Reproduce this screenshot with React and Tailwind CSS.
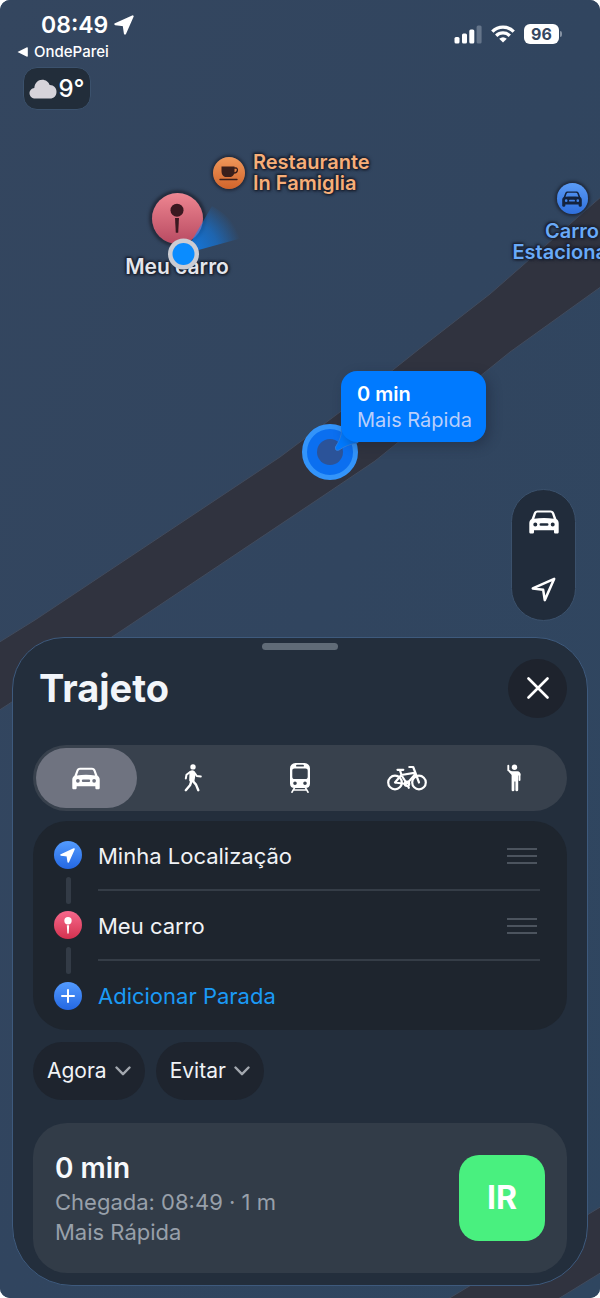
import React from "react";

function CarIcon({ className }) {
  return (
    <svg viewBox="0 0 30 24" className={className} fill="currentColor" aria-hidden="true">
      <path
        fillRule="evenodd"
        d="M8.6 0.6h12.8c2 0 3.2 0.9 3.9 2.7l2.1 5.8c1.500 1 2.300 2.400 2.300 4.300v8.500c0 1-0.600 1.700-1.600 1.700h-1.500c-1 0-1.600-0.700-1.600-1.700v-1.700H5v1.700c0 1-0.600 1.700-1.600 1.700H1.900c-1 0-1.600-0.700-1.600-1.700v-8.500c0-1.900 0.800-3.300 2.300-4.300l2.100-5.800C5.400 1.500 6.600 0.600 8.600 0.600zM9 2.600c-1 0-1.700 0.400-2.100 1.400L5.300 8.700c3-0.400 6.200-0.600 9.700-0.600s6.700 0.200 9.700 0.600l-1.600-4.700c-0.400-1-1.100-1.400-2.100-1.400zM6.300 12.500a2 2 0 1 0 0 4a2 2 0 1 0 0-4zM23.700 12.500a2 2 0 1 0 0 4a2 2 0 1 0 0-4zM11.800 13.200a1.300 1.300 0 0 0 0 2.600h6.400a1.300 1.300 0 0 0 0-2.600z"
      />
    </svg>
  );
}

function WalkIcon({ className }) {
  return (
    <svg viewBox="0 0 18 28" className={className} fill="none" stroke="currentColor" strokeLinecap="round" strokeLinejoin="round" aria-hidden="true">
      <circle cx="9" cy="2.900" r="2.700" fill="currentColor" stroke="none" />
      <path d="M6.400 7.800Q8.400 6.600 10 7.900L10.300 12.500L9.500 17L6.100 16.500z" fill="currentColor" strokeWidth="1.800" />
      <path d="M5.800 8.200L2.500 10.800L1.800 14.500" strokeWidth="2" />
      <path d="M10.500 8.700L12.800 12L16.800 12.500" strokeWidth="2" />
      <path d="M8.800 17L12 20.600L14.300 26.200" strokeWidth="2.400" />
      <path d="M7.300 17.500L6 21.300L1.800 26.200" strokeWidth="2.400" />
    </svg>
  );
}

function TrainIcon({ className }) {
  return (
    <svg viewBox="0 0 20 30" className={className} aria-hidden="true">
      <path
        fill="currentColor"
        fillRule="evenodd"
        d="M5.500 0h9C18 0.400 20 2.200 20 5.500v14.900c0 2.900-1.700 4.600-4.600 4.600H4.600C1.700 25 0 23.300 0 20.400V5.500C0 2.200 2 0.400 5.500 0zM7 1.700a0.900 0.900 0 0 0 0 1.900h6a0.900 0.900 0 0 0 0-1.900zM4.500 5.600C3.100 5.600 2.300 6.400 2.300 7.800v6.200c0 1.300 0.800 2.100 2.200 2.100h11c1.400 0 2.200-0.800 2.200-2.100V7.800c0-1.400-0.800-2.200-2.200-2.200zM5 18.400a1.800 1.800 0 1 0 0 3.600a1.800 1.800 0 1 0 0-3.600zM15 18.400a1.800 1.800 0 1 0 0 3.600a1.800 1.800 0 1 0 0-3.600z"
      />
      <path d="M4.300 25.200L2 29.200M15.700 25.200L18 29.200M4 27h12" stroke="currentColor" strokeWidth="1.700" strokeLinecap="round" fill="none" />
    </svg>
  );
}

function BikeIcon({ className }) {
  return (
    <svg viewBox="0 0 40 26" className={className} fill="none" stroke="currentColor" strokeWidth="2.200" strokeLinecap="round" strokeLinejoin="round" aria-hidden="true">
      <circle cx="8" cy="17.500" r="6.800" />
      <circle cx="32" cy="17.500" r="6.800" />
      <path d="M8 17.500L14.300 10L27.300 7.800M8 17.500L19 19M14.300 10L19.500 18M20.500 18L28 9.500M32 17.500L26.200 2H22.300M14.500 10L12.900 5M10.500 4.800H16.300" />
      <circle cx="20" cy="18.800" r="2.200" fill="none" />
      <path d="M20.800 20.800L21.800 22.800" />
    </svg>
  );
}

function HailIcon({ className }) {
  return (
    <svg viewBox="0 0 14 28" className={className} aria-hidden="true">
      <circle cx="7.500" cy="3.200" r="2.700" fill="currentColor" />
      <path d="M1.300 1.800V6.200L4.800 8.700M12.500 10V16" fill="none" stroke="currentColor" strokeWidth="1.900" strokeLinecap="round" strokeLinejoin="round" />
      <path d="M4 7.200H10.500Q13.400 7.500 13.400 10.500V11.500H11.200V26q0 1.300-1.400 1.300T8.400 26V17.600H7.400V26q0 1.300-1.400 1.300T4.600 26V11L2 8z" fill="currentColor" />
    </svg>
  );
}

function ArrowIcon({ className, outline }) {
  return (
    <svg viewBox="0 0 24 24" className={className} fill={outline ? "none" : "currentColor"} stroke="currentColor" strokeWidth={outline ? 2.4 : 2.6} strokeLinejoin="round" aria-hidden="true">
      <path d="M22.300 1.700L1.700 11L11.700 12.300L13.200 22.200z" />
    </svg>
  );
}

function PinGlyph({ className }) {
  return (
    <svg viewBox="0 0 14 30" className={className} fill="currentColor" aria-hidden="true">
      <circle cx="7" cy="6.700" r="6.500" />
      <path d="M5 14.500h4l-0.800 14.700h-2.400z" />
    </svg>
  );
}

function MapBackground() {
  return (
    <svg viewBox="0 0 600 1298" preserveAspectRatio="xMidYMid slice" className="absolute inset-0 h-full w-full" aria-hidden="true">
      <defs>
        <linearGradient id="ground" x1="0" y1="0" x2="1" y2="1">
          <stop offset="0" stopColor="#34465f" />
          <stop offset="0.500" stopColor="#31455f" />
          <stop offset="1" stopColor="#2f4660" />
        </linearGradient>
      </defs>
      <rect width="600" height="1298" fill="url(#ground)" />
      <path d="M-2 643L35 620L280 457L340 412L418 350L490 294L602 196V286L510 352L375 461L317 500L115 635L-2 711z" fill="#30333f" stroke="#414b5d" strokeWidth="1" />
      <path d="M448 1299L602 1206V1272L558 1299z" fill="#30333f" stroke="#414b5d" strokeWidth="1" />
    </svg>
  );
}

const glow = "[text-shadow:0_0_2px_#1c2230,0_0_3px_#1c2230,0_0_4px_#1c2230,1px_1px_2px_#1c2230,-1px_-1px_2px_#1c2230]";

function MapPins() {
  return (
    <div className="absolute inset-0 overflow-hidden">
      <div className="absolute left-[213px] top-[152px] flex items-center gap-2">
        <span className="flex size-8 items-center justify-center rounded-full bg-linear-to-b from-[#f0985a] to-[#d2642a] shadow-[0_0_3px_2px_#232c3d]">
          <svg viewBox="0 0 20 15" className="h-[15px] w-5 text-[#3a1f1b]" aria-hidden="true">
            <path d="M2.500 0.500h13v4.500c0 3.500-1.800 6-4.500 6H7c-2.700 0-4.500-2.500-4.500-6z" fill="currentColor" />
            <path d="M15 2h1.700c2.700 0 2.400 5-1.700 5" fill="none" stroke="currentColor" strokeWidth="1.300" />
            <path d="M1 13.500h17" stroke="currentColor" strokeWidth="1.400" strokeLinecap="round" />
          </svg>
        </span>
        <span className={"text-[20px] font-semibold leading-[21px] text-[#f7ae78] " + glow}>
          Restaurante
          <br />
          In Famiglia
        </span>
      </div>

      <div className="absolute left-[97px] top-[193px] flex w-40 flex-col items-center">
        <span className="flex size-[51px] items-center justify-center rounded-full bg-linear-to-b from-[#ee8691] to-[#b84a62] shadow-[0_0_3px_3px_#232c3d]">
          <PinGlyph className="h-[31px] w-[14px] text-[#3a1820]" />
        </span>
        <span className={"mt-[11px] whitespace-nowrap text-[21px] font-semibold leading-6 text-[#e4e6ec] " + glow}>Meu carro</span>
      </div>

      <svg viewBox="0 0 90 70" className="absolute left-[166px] top-[200px] h-[70px] w-[90px]" aria-hidden="true">
        <defs>
          <radialGradient id="beam" gradientUnits="userSpaceOnUse" cx="18" cy="54" r="58">
            <stop offset="0.200" stopColor="#0a84ff" stopOpacity="0.750" />
            <stop offset="0.600" stopColor="#0a84ff" stopOpacity="0.500" />
            <stop offset="1" stopColor="#0a84ff" stopOpacity="0" />
          </radialGradient>
        </defs>
        <path d="M18 54L46 6Q68 18 76 38z" fill="url(#beam)" />
        <circle cx="17.500" cy="54" r="15.500" fill="#cbccd3" />
        <circle cx="17.500" cy="54" r="11" fill="#0a8cff" />
      </svg>

      <div className="absolute left-[492px] top-[183px] flex w-40 flex-col items-center">
        <span className="flex size-[31px] items-center justify-center rounded-full bg-linear-to-b from-[#5b9bf5] to-[#2f6fdc] shadow-[0_0_3px_2px_#1f293b]">
          <CarIcon className="h-4 w-5 text-[#14233d]" />
        </span>
        <span className={"mt-[7px] text-center text-[20px] font-semibold leading-[21px] text-[#69aaf8] " + glow}>
          Carro
          <br />
          Estacionado
        </span>
      </div>

      <span className="absolute left-[302px] top-[424px] size-14 rounded-full border-5 border-[#3394fa] bg-[#0b6ff0] p-[10px]">
        <span className="block size-[26px] rounded-full bg-[#2b5399]" />
      </span>
      <svg viewBox="0 0 30 30" className="absolute left-[334px] top-[424px] size-[30px]" aria-hidden="true">
        <path d="M7.500 0V6C7.500 13 4.500 18 1.500 23Q1 27.500 5 26Q12 21 24 18.500z" fill="#007aff" stroke="#2f7fe0" strokeWidth="1" />
      </svg>
      <div className="absolute left-[341px] top-[371px] flex w-[145px] flex-col rounded-2xl bg-[#007aff] px-4 pb-[9px] pt-[10px] leading-[26px] shadow-[4px_4px_12px_rgba(20,30,50,0.35)]">
        <span className="text-[20px] font-semibold text-white">0 min</span>
        <span className="whitespace-nowrap text-[20px] text-[#b9cffb]">Mais Rápida</span>
      </div>
    </div>
  );
}

function StatusBar() {
  return (
    <header className="relative flex items-start justify-between pl-[17px] pr-[38px] pt-3 text-white">
      <div>
        <div className="flex items-center gap-[6px] pl-6">
          <span className="text-[23px] font-semibold leading-[26px]">08:49</span>
          <ArrowIcon className="size-5" />
        </div>
        <a href="#onde-parei" className="mt-1 flex items-center gap-[6px] text-[15px] font-medium leading-5">
          <svg viewBox="0 0 11 10" className="h-[10px] w-[11px]" fill="currentColor" aria-hidden="true">
            <path d="M0.500 5L10 0.300Q10.800 0.200 10.800 1V9Q10.800 9.800 10 9.700z" />
          </svg>
          OndeParei
        </a>
        <div className="ml-[6px] mt-[5px] flex h-[43px] w-[68px] items-center justify-center gap-px rounded-[14px] border border-[#3b516c] bg-[#222d3a]">
          <svg viewBox="0 0 28 20" className="h-5 w-7" fill="#d6d3da" aria-hidden="true">
            <path d="M6.500 19.500C3 19.500 0.500 17.200 0.500 14.200C0.500 11.300 2.700 9.200 5.300 8.900C5.700 4.200 9 0.800 13.200 0.800C16.800 0.800 19.500 3 20.600 6C24.600 5.800 27.500 8.800 27.500 12.700C27.500 16.700 24.800 19.500 21 19.500z" />
          </svg>
          <span className="text-[24px] font-medium leading-7">9°</span>
        </div>
      </div>
      <div className="flex items-center gap-[9px] pt-3">
        <svg viewBox="0 0 28 19" className="h-[19px] w-7" fill="#fff" role="img" aria-label="Sinal">
          <rect x="0.500" y="12" width="5" height="6.500" rx="1.500" />
          <rect x="8" y="8.500" width="5" height="10" rx="1.500" />
          <rect x="15.300" y="4.500" width="5" height="14" rx="1.500" />
          <rect x="22.600" y="0.500" width="5" height="18" rx="1.500" fill="#65758a" />
        </svg>
        <svg viewBox="0 0 24 18" className="h-[18px] w-6" fill="none" stroke="#fff" strokeWidth="3.300" role="img" aria-label="Wi-Fi">
          <path d="M1.300 6.600C7.300 0.700 16.700 0.700 22.700 6.600" />
          <path d="M5.200 10.700C9 7 15 7 18.800 10.700" />
          <path d="M8.200 13.700Q12 10.700 15.800 13.700L12 17.600z" fill="#fff" stroke="none" />
        </svg>
        <span className="flex items-center gap-px">
          <span className="flex h-5 w-[35px] items-center justify-center rounded-[6px] bg-white text-[16px] font-bold text-[#34465f]">96</span>
          <span className="h-[6px] w-[2px] rounded-r-full bg-[#8592a3]" />
        </span>
      </div>
    </header>
  );
}

const modes = [
  { label: "Carro", Icon: CarIcon, size: "h-[23px] w-7" },
  { label: "A pé", Icon: WalkIcon, size: "h-7 w-[18px]" },
  { label: "Transporte público", Icon: TrainIcon, size: "h-[30px] w-5" },
  { label: "Bicicleta", Icon: BikeIcon, size: "h-[26px] w-10" },
  { label: "Táxi", Icon: HailIcon, size: "h-7 w-[14px]" },
];

function DragHandle({ label }) {
  return (
    <button type="button" aria-label={label} className="flex w-[30px] flex-col gap-[5px]">
      <span className="h-[2px] bg-[#4c545e]" />
      <span className="h-[2px] bg-[#4c545e]" />
      <span className="h-[2px] bg-[#4c545e]" />
    </button>
  );
}

function Stop({ label, badge, children }) {
  return (
    <li className="flex h-[70px]">
      <div className="flex w-7 flex-col items-center pt-5">
        <span className={"flex size-7 shrink-0 items-center justify-center rounded-full bg-linear-to-b text-white " + badge}>{children}</span>
        <span className="mt-2 h-[27px] w-[5px] shrink-0 rounded-full bg-[#333b46]" />
      </div>
      <div className="ml-4 flex flex-1 items-center justify-between border-b-2 border-[#353d47] pr-[3px] pt-[2px]">
        <span className="text-[22px] leading-7 text-[#f1f3f6]">{label}</span>
        <DragHandle label={"Reordenar " + label} />
      </div>
    </li>
  );
}

function Chip({ label }) {
  return (
    <button type="button" className="flex h-[58px] items-center gap-2 rounded-full bg-[#1e242e] px-[14px] text-[21px] text-[#f1f3f6]">
      {label}
      <svg viewBox="0 0 16 10" className="h-[10px] w-4" fill="none" stroke="#a3a8af" strokeWidth="2.400" strokeLinecap="round" strokeLinejoin="round" aria-hidden="true">
        <path d="M1.500 1.500L8 8.200L14.500 1.500" />
      </svg>
    </button>
  );
}

function RouteSheet() {
  return (
    <section className="relative mx-3 mb-3 rounded-t-[52px] rounded-b-[60px] border border-[#3e5a7d] bg-[#232e3c] px-5 pb-3 pt-[5px]">
      <div className="mx-auto h-[7px] w-[76px] rounded-full bg-[#606b77]" />
      <div className="mt-2 flex items-center justify-between pl-[6px]">
        <h1 className="text-[38px] font-bold leading-[60px] text-[#f2f5fa]">Trajeto</h1>
        <button type="button" aria-label="Fechar" className="flex size-[59px] items-center justify-center rounded-full bg-[#1e232d]">
          <svg viewBox="0 0 22 22" className="size-[22px]" stroke="#fff" strokeWidth="2.600" strokeLinecap="round" aria-hidden="true">
            <path d="M1.500 1.500L20.500 20.500M20.500 1.500L1.500 20.500" />
          </svg>
        </button>
      </div>

      <div className="mt-[27px] grid h-[66px] grid-cols-5 rounded-full bg-[#38414d]">
        {modes.map(({ label, Icon, size }, i) => (
          <button
            key={label}
            type="button"
            aria-label={label}
            aria-pressed={i === 0}
            className={"m-[3px] flex items-center justify-center rounded-full text-white " + (i === 0 ? "bg-[#6f7380]" : "")}
          >
            <Icon className={size} />
          </button>
        ))}
      </div>

      <ul className="mt-[10px] rounded-[34px] bg-[#1e252e] pl-[21px] pr-[27px]">
        <Stop label="Minha Localização" badge="from-[#539bff] to-[#2467e2]">
          <ArrowIcon className="mr-px mt-px size-[15px]" />
        </Stop>
        <Stop label="Meu carro" badge="from-[#f7678c] to-[#d3304f]">
          <PinGlyph className="h-[17px] w-2" />
        </Stop>
        <li className="flex h-[69px] items-center">
          <span className="flex size-7 items-center justify-center rounded-full bg-linear-to-b from-[#539bff] to-[#2467e2]">
            <svg viewBox="0 0 14 14" className="size-[14px]" stroke="#fff" strokeWidth="2" strokeLinecap="round" aria-hidden="true">
              <path d="M7 1V13M1 7H13" />
            </svg>
          </span>
          <button type="button" className="ml-4 text-[22px] leading-7 text-[#1b9af5]">Adicionar Parada</button>
        </li>
      </ul>

      <div className="mt-3 flex gap-[11px]">
        <Chip label="Agora" />
        <Chip label="Evitar" />
      </div>

      <div className="mt-[23px] flex h-[150px] items-center justify-between rounded-[34px] bg-[#323c48] px-[22px]">
        <div className="pt-[2px] text-[22px] leading-[30px] text-[#98a0aa]">
          <h2 className="mb-[3px] text-[28px] font-semibold leading-8 text-[#f7f9fc]">0 min</h2>
          <p>Chegada: 08:49 · 1 m</p>
          <p>Mais Rápida</p>
        </div>
        <button type="button" className="size-[86px] rounded-[20px] bg-[#49f07f] text-[32px] font-bold text-white">IR</button>
      </div>
    </section>
  );
}

export default function App() {
  return (
    <div className="bg-white">
      <main className="relative flex min-h-screen flex-col overflow-hidden rounded-[10px] bg-[#31455f] font-['Inter','Liberation_Sans',sans-serif]">
        <MapBackground />
        <MapPins />
        <StatusBar />
        <div className="relative mb-4 mr-6 mt-auto flex h-[132px] w-[65px] flex-col justify-between self-end rounded-full border border-[#3b516c] bg-[#212c3b] pb-[18px] pt-5 text-white">
          <button type="button" aria-label="Modo do mapa" className="flex justify-center">
            <CarIcon className="h-6 w-[30px]" />
          </button>
          <button type="button" aria-label="Minha localização" className="flex justify-center">
            <ArrowIcon outline className="size-[25px]" />
          </button>
        </div>
        <RouteSheet />
      </main>
    </div>
  );
}
